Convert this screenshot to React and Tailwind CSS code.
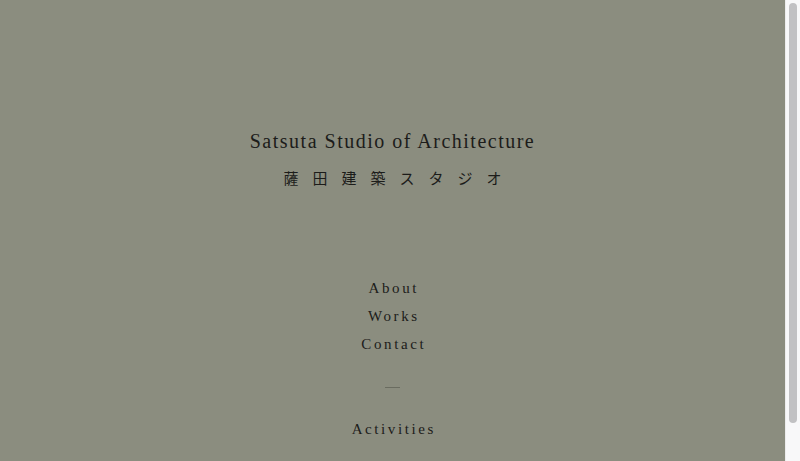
export default function App() {
  const links = ['About', 'Works', 'Contact'];

  return (
    <div className="h-[461px] flex bg-[#8b8d7f] overflow-hidden">
      <main
        className="w-[785px] min-h-[505px] text-[#1c1c1a] flex flex-col items-center pt-[127px]"
        style={{ fontFamily: '"Liberation Serif", "Noto Sans CJK JP", serif' }}
      >
        {/* site title */}
        <h1 className="text-[20px] leading-[28px] tracking-[1.5px] font-normal">
          Satsuta Studio of Architecture
        </h1>
        <p
          className="mt-[11px] text-[15px] leading-[24px] tracking-[14px] pl-[14px]"
          style={{ fontFamily: '"Noto Sans CJK JP", serif' }}
        >
          薩田建築スタジオ
        </p>

        {/* menu */}
        <nav className="mt-[84px] flex flex-col items-center">
          {links.map((l) => (
            <a key={l} className="text-[15px] leading-[28px] tracking-[2.6px] pl-[2.6px]" href="#">
              {l}
            </a>
          ))}
        </nav>

        <div className="mt-[29px] w-[15px] h-px bg-[#6a6c60]" />

        <a className="mt-[27px] text-[15px] leading-[28px] tracking-[2.6px] pl-[2.6px]" href="#">
          Activities
        </a>
      </main>

      {/* scrollbar */}
      <div className="w-[15px] h-full bg-[#f8f8f9] border-l border-[#ececec] px-[3px] pt-[3px]">
        <div className="h-[420px] rounded-full bg-[#c1c1c3]" />
      </div>
    </div>
  );
}
